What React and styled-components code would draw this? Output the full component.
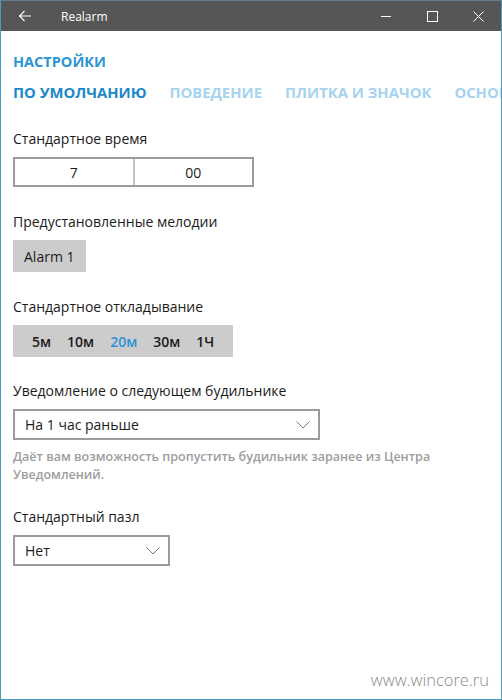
import React, { useState } from 'react';
import styled, { createGlobalStyle } from 'styled-components';

const GlobalStyle = createGlobalStyle`
  html, body {
    margin: 0;
    padding: 0;
    background: #ffffff;
  }
  body {
    font-family: "Open Sans", "Noto Sans", "Liberation Sans", sans-serif;
    color: #1b1b1b;
  }
`;

const Window = styled.div`
  position: relative;
  width: 502px;
  height: 700px;
  box-sizing: border-box;
  border: 1px solid #4b9bbf;
  border-top-color: #5c7f90;
  background: #ffffff;
  display: flex;
  flex-direction: column;
  overflow: hidden;
`;

const TitleBar = styled.div`
  height: 30px;
  flex-shrink: 0;
  background: #565656;
  display: flex;
  align-items: center;
  color: #ffffff;
`;

const BackButton = styled.div`
  width: 48px;
  height: 30px;
  display: flex;
  align-items: center;
  justify-content: center;
`;

const AppTitle = styled.div`
  margin-left: 12px;
  font-size: 12px;
  font-weight: 400;
  flex: 1;
`;

const WinButton = styled.div`
  width: 46px;
  height: 30px;
  display: flex;
  align-items: center;
  justify-content: center;
`;

const Content = styled.div`
  padding: 0 12px;
  display: flex;
  flex-direction: column;
`;

const PageTitle = styled.div`
  margin-top: 21px;
  height: 20px;
  line-height: 20px;
  font-size: 14.5px;
  font-weight: 700;
  color: #2b95d5;
`;

const Tabs = styled.div`
  margin-top: 10px;
  display: flex;
  gap: 23px;
  white-space: nowrap;
`;

const Tab = styled.div`
  height: 20px;
  line-height: 20px;
  font-size: 14.8px;
  font-weight: 700;
  color: ${p => (p.$active ? '#1c87c9' : '#a6d3ef')};
  flex-shrink: 0;
`;

const Section = styled.div`
  margin-top: ${p => p.$top || 25}px;
  display: flex;
  flex-direction: column;
  align-items: flex-start;
`;

const Label = styled.div`
  height: 20px;
  line-height: 20px;
  font-size: 14px;
  margin-bottom: 8px;
`;

const TimeBox = styled.div`
  width: 241px;
  height: 30px;
  box-sizing: border-box;
  border: 2px solid #9b9b9b;
  display: flex;
`;

const TimeCell = styled.div`
  flex: 1;
  display: flex;
  align-items: center;
  justify-content: center;
  font-size: 14px;
  & + & {
    border-left: 2px solid #c4c4c4;
  }
`;

const GreyButton = styled.div`
  height: 32px;
  padding: 0 11px;
  background: #cccccc;
  display: flex;
  align-items: center;
  font-size: 14px;
`;

const SnoozeBar = styled.div`
  height: 32px;
  width: 220px;
  box-sizing: border-box;
  padding: 0 11px;
  background: #cccccc;
  display: flex;
  align-items: center;
`;

const SnoozeItem = styled.div`
  padding: 0 8px;
  font-size: 14px;
  font-weight: 600;
  color: ${p => (p.$active ? '#2b93d6' : '#1b1b1b')};
  cursor: pointer;
`;

const Select = styled.div`
  width: ${p => p.$width}px;
  height: 31px;
  box-sizing: border-box;
  border: 2px solid #9b9b9b;
  display: flex;
  align-items: center;
  justify-content: space-between;
  padding: 0 8px 0 10px;
  font-size: 14px;
`;

const Hint = styled.div`
  margin-top: 8px;
  width: 470px;
  font-size: 12.5px;
  line-height: 18px;
  font-weight: 600;
  color: #9d9d9d;
`;

const Watermark = styled.div`
  position: absolute;
  right: 12px;
  bottom: 8px;
  font-size: 16.5px;
  font-weight: 300;
  color: #8a8a8a;
`;

const Chevron = () => (
  <svg width="14" height="8" viewBox="0 0 14 8">
    <path d="M0.5 0.5 L7 7 L13.5 0.5" fill="none" stroke="#7a7a7a" strokeWidth="1" />
  </svg>
);

const snoozeOptions = ['5м', '10м', '20м', '30м', '1Ч'];

function App() {
  const [snooze, setSnooze] = useState('20м');

  return (
    <>
      <GlobalStyle />
      <Window>
        <TitleBar>
          <BackButton>
            <svg width="14" height="12" viewBox="0 0 14 12">
              <path d="M13 6 H1.5 M6.5 1 L1.5 6 L6.5 11" fill="none" stroke="#fff" strokeWidth="1.1" />
            </svg>
          </BackButton>
          <AppTitle>Realarm</AppTitle>
          <WinButton>
            <svg width="10" height="10" viewBox="0 0 10 10">
              <path d="M0 5.5 H10" stroke="#fff" strokeWidth="1" />
            </svg>
          </WinButton>
          <WinButton>
            <svg width="11" height="11" viewBox="0 0 11 11">
              <rect x="0.5" y="0.5" width="10" height="10" fill="none" stroke="#fff" strokeWidth="1" />
            </svg>
          </WinButton>
          <WinButton>
            <svg width="11" height="11" viewBox="0 0 11 11">
              <path d="M0.5 0.5 L10.5 10.5 M10.5 0.5 L0.5 10.5" stroke="#fff" strokeWidth="1" />
            </svg>
          </WinButton>
        </TitleBar>
        <Content>
          <PageTitle>НАСТРОЙКИ</PageTitle>
          <Tabs>
            <Tab $active>ПО УМОЛЧАНИЮ</Tab>
            <Tab>ПОВЕДЕНИЕ</Tab>
            <Tab>ПЛИТКА И ЗНАЧОК</Tab>
            <Tab>ОСНОВНЫЕ</Tab>
          </Tabs>

          <Section $top={27}>
            <Label>Стандартное время</Label>
            <TimeBox>
              <TimeCell>7</TimeCell>
              <TimeCell>00</TimeCell>
            </TimeBox>
          </Section>

          <Section>
            <Label>Предустановленные мелодии</Label>
            <GreyButton>Alarm 1</GreyButton>
          </Section>

          <Section>
            <Label>Стандартное откладывание</Label>
            <SnoozeBar>
              {snoozeOptions.map(o => (
                <SnoozeItem key={o} $active={o === snooze} onClick={() => setSnooze(o)}>
                  {o}
                </SnoozeItem>
              ))}
            </SnoozeBar>
          </Section>

          <Section $top={24}>
            <Label>Уведомление о следующем будильнике</Label>
            <Select $width={307}>
              <span>На 1 час раньше</span>
              <Chevron />
            </Select>
            <Hint>Даёт вам возможность пропустить будильник заранее из Центра Уведомлений.</Hint>
          </Section>

          <Section $top={23}>
            <Label>Стандартный пазл</Label>
            <Select $width={157}>
              <span>Нет</span>
              <Chevron />
            </Select>
          </Section>
        </Content>
        <Watermark>www.wincore.ru</Watermark>
      </Window>
    </>
  );
}

export default App;
